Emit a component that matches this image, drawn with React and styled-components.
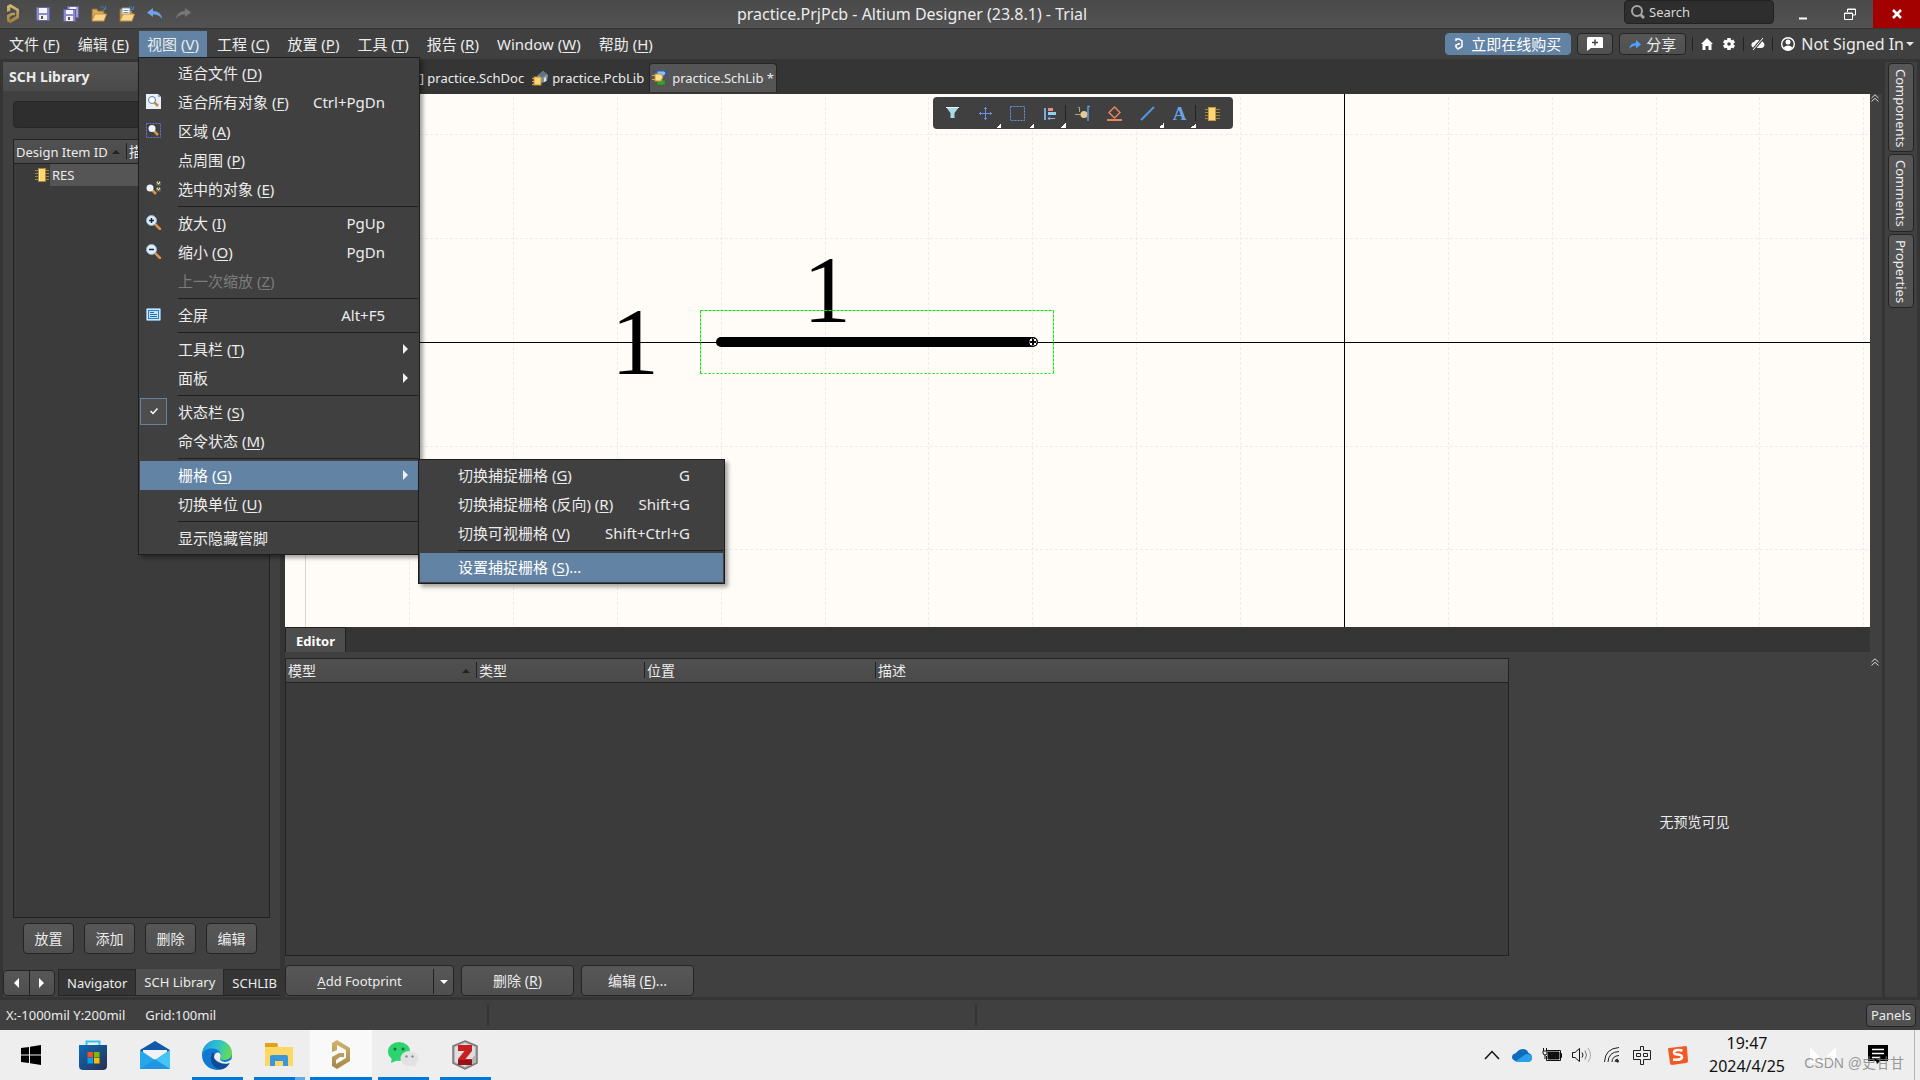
import styled, { createGlobalStyle, css } from 'styled-components';

const MENU_BAR = [
  { text: '文件', hot: 'F' },
  { text: '编辑', hot: 'E' },
  { text: '视图', hot: 'V', open: true },
  { text: '工程', hot: 'C' },
  { text: '放置', hot: 'P' },
  { text: '工具', hot: 'T' },
  { text: '报告', hot: 'R' },
  { text: 'Window', hot: 'W' },
  { text: '帮助', hot: 'H' },
];

const GRID_MENU = [
  { text: '切换捕捉栅格', hot: 'G', shortcut: 'G' },
  { text: '切换捕捉栅格 (反向)', hot: 'R', shortcut: 'Shift+G' },
  { text: '切换可视栅格', hot: 'V', shortcut: 'Shift+Ctrl+G' },
  { separator: true },
  { text: '设置捕捉栅格', hot: 'S', tail: '...', active: true },
];

const VIEW_MENU = [
  { text: '适合文件', hot: 'D' },
  { text: '适合所有对象', hot: 'F', shortcut: 'Ctrl+PgDn', icon: 'fitAll' },
  { text: '区域', hot: 'A', icon: 'area' },
  { text: '点周围', hot: 'P' },
  { text: '选中的对象', hot: 'E', icon: 'selected' },
  { separator: true },
  { text: '放大', hot: 'I', shortcut: 'PgUp', icon: 'zoomIn' },
  { text: '缩小', hot: 'O', shortcut: 'PgDn', icon: 'zoomOut' },
  { text: '上一次缩放', hot: 'Z', disabled: true },
  { separator: true },
  { text: '全屏', shortcut: 'Alt+F5', icon: 'fullScreen' },
  { separator: true },
  { text: '工具栏', hot: 'T', arrow: true },
  { text: '面板', arrow: true },
  { separator: true },
  { text: '状态栏', hot: 'S', checked: true },
  { text: '命令状态', hot: 'M' },
  { separator: true },
  { text: '栅格', hot: 'G', arrow: true, active: true, children: GRID_MENU },
  { text: '切换单位', hot: 'U' },
  { separator: true },
  { text: '显示隐藏管脚' },
];

const GRID_X = [124, 228, 332, 436, 540, 643, 747, 851, 955, 1163, 1267, 1371, 1474, 1578];
const GRID_Y = [40, 144, 352, 455];

/* ---------- icons ---------- */

const AltiumLogo = ({ size = 20, id = 'gold', from = '#d8bd78', to = '#9c7c3c' }) => (
  <svg width={size} height={size} viewBox="0 0 30 30">
    <defs>
      <linearGradient id={id} x1="0" y1="0" x2="0" y2="1">
        <stop offset="0" stopColor={from} />
        <stop offset="1" stopColor={to} />
      </linearGradient>
    </defs>
    <path d="M6 3 L11 0 L24 8 V21 L11 29 L6 26 V17 L13 13 H18 V17 H14 L10 20 V24 L20 18 V10 L11 5 V10 L6 12 Z" fill={`url(#${id})`} />
  </svg>
);

const Chip = ({ width = 14, height = 14 }) => (
  <svg width={width} height={height} viewBox="0 0 14 14">
    <path d="M0 2.5H14M0 5.5H14M0 8.5H14M0 11.5H14" stroke="#a5872f" strokeWidth="1" />
    <rect x="3.5" y="0.5" width="7" height="13" fill="#fbd77c" stroke="#b5832a" />
    <path d="M4.500 1V13" stroke="#fff2c4" />
  </svg>
);

const SaveIcon = () => (
  <svg width="14" height="14" viewBox="0 0 14 14">
    <path d="M0.500 0.500H13.500V13.500H1.500L0.500 12.500Z" fill="#8d8cc9" stroke="#6765a8" />
    <rect x="3" y="1" width="8" height="5" fill="#f5f5fb" />
    <rect x="3" y="8" width="8" height="5" fill="#f1f1f1" />
    <rect x="5" y="9" width="2" height="3" fill="#555" />
  </svg>
);

const SaveAllIcon = () => (
  <svg width="16" height="16" viewBox="0 0 16 16">
    <rect x="4.500" y="0.500" width="11" height="11" fill="#a3a1da" stroke="#6765a8" />
    <rect x="7" y="1" width="6" height="3" fill="#f5f5fb" />
    <rect x="0.500" y="3.500" width="12" height="12" fill="#8d8cc9" stroke="#5f5da0" />
    <rect x="3" y="4" width="7" height="4" fill="#f5f5fb" />
    <rect x="3" y="10" width="7" height="5" fill="#f1f1f1" />
    <rect x="5" y="11" width="2" height="3" fill="#555" />
  </svg>
);

const OpenIcon = ({ sheet }) => (
  <svg width="16" height="16" viewBox="0 0 16 16">
    <path d="M1 15V3H6L7 5H13V8" fill="#d9ab5e" stroke="#8f6a2c" />
    {sheet && <path d="M3 2H11V10H3ZM4.500 4.500H9.500M4.500 6.500H9.500" fill="#fff" stroke="#7f97b3" />}
    <path d="M1 15L4 8H15.500L13 15Z" fill="#fbd48b" stroke="#c08d3f" />
    <path d="M9 2Q12 -1 14 3M14.500 0V3.500H11.500" fill="none" stroke="#3f7ea8" />
  </svg>
);

const UndoIcon = ({ color, flip }) => (
  <svg width="16" height="12" viewBox="0 0 16 12">
    <path d={flip ? 'M16 4.500L10 0V3Q2 3 1 11Q4 6 10 6.500V9Z' : 'M0 4.500L6 0V3Q14 3 15 11Q12 6 6 6.500V9Z'} fill={color} />
  </svg>
);

const Magnifier = ({ sign }) => (
  <>
    <path d="M9 9L14 14" stroke="#d9954a" strokeWidth="2.500" strokeLinecap="round" />
    <circle cx="5.500" cy="5.500" r="5" fill="#dfeefb" stroke="#8fb3d6" />
    {sign && <path d={sign === '+' ? 'M3 5.500H8M5.500 3V8' : 'M3 5.500H8'} stroke="#223" strokeWidth="1.500" />}
  </>
);

const MENU_ICONS = {
  fitAll: (
    <>
      <path d="M0 0H12L15 3V15H0Z" fill="#e9f0fb" />
      <path d="M12 0L15 3H12Z" fill="#8fa3c4" />
      <path d="M8.500 8.500L12 12" stroke="#c98a3a" strokeWidth="2.500" />
      <circle cx="6" cy="6" r="3.500" fill="#f9fcff" stroke="#6d7f96" />
    </>
  ),
  area: (
    <>
      <rect x="0.500" y="0.500" width="14" height="14" fill="none" stroke="#6272d0" strokeDasharray="2 1" />
      <path d="M8 8L12 12" stroke="#d9954a" strokeWidth="2.500" />
      <circle cx="6" cy="5.500" r="3.500" fill="#eef7ff" />
    </>
  ),
  selected: (
    <>
      <path d="M6 9L10 13" stroke="#d9954a" strokeWidth="2.500" />
      <circle cx="4" cy="7" r="3.500" fill="#e9f4ff" />
      <path d="M11 1L14 4M14 1L11 4M11 7L14 10M14 7L11 10" stroke="#f3ef9a" strokeDasharray="1 1" strokeWidth="2" />
    </>
  ),
  zoomIn: <Magnifier sign="+" />,
  zoomOut: <Magnifier sign="-" />,
  fullScreen: (
    <>
      <rect x="0.500" y="1.500" width="14" height="12" rx="1" fill="#cfe6f8" stroke="#7fa9cc" />
      <rect x="2.500" y="3.500" width="10" height="8" fill="#bfe3fb" stroke="#2e7fc0" />
      <path d="M4 5.500H8M4 7.500H11M4 9.500H11" stroke="#2f6fa8" />
    </>
  ),
};

const PcbLibIcon = () => (
  <svg width="16" height="16" viewBox="0 0 16 16">
    <path d="M5 6L11 1L16 5L15 11L10 13Z" fill="#7f93a3" />
    <path d="M6 5L11 1L15 4L10 8Z" fill="#5f7488" />
    <path d="M12 8L14 7V11L12 12Z" fill="#d9e6ee" />
    <path d="M0 8.500H3M0 11.500H3M0 14.500H3" stroke="#d9a83c" />
    <rect x="2" y="7" width="7" height="8" fill="#fbd77c" stroke="#c8922f" />
  </svg>
);

const SchLibIcon = () => (
  <svg width="16" height="16" viewBox="0 0 16 16">
    <path d="M1 1.500H16M8 5.500H16" stroke="#1d50b8" />
    <path d="M5 1H12L14 3L12 6H5Z" fill="#8ebcf5" stroke="#2b62c8" />
    <rect x="5" y="10" width="8" height="5" fill="#3f9a35" stroke="#226c1d" strokeDasharray="1 1" />
    <path d="M0 5.500H4M0 9.500H4" stroke="#d9a83c" />
    <path d="M3 4H9L11 7L9 11H3Z" fill="#fbe08d" stroke="#c8922f" />
  </svg>
);

const TOOLS = [
  { name: 'Filter', art: <><path d="M1 1H14L9.500 7V12H5.500V7Z" fill="#a9dbe6" /><path d="M1 1.500H14" stroke="#dff6fb" /></> },
  { name: 'Move', corner: true, art: <path d="M1 7.500H14M7.500 1V14M2.500 6V9M12.500 6V9M6 2.500H9M6 12.500H9" stroke="#6b8fe0" /> },
  { name: 'Select', corner: true, art: <rect x="0.500" y="0.500" width="14" height="14" fill="none" stroke="#6b8fe0" strokeDasharray="2 1" /> },
  {
    name: 'Align', corner: true, split: true,
    art: (
      <>
        <path d="M2 2V14" stroke="#79a8e6" strokeWidth="2" />
        <rect x="5" y="2" width="5" height="3" fill="#e88" />
        <rect x="5" y="6" width="8" height="3" fill="#8cd4ea" />
        <path d="M5 12.500H12M7 10.500L5 12.500L7 14" stroke="#8fb3e6" fill="none" />
      </>
    ),
  },
  {
    name: 'Place Pin',
    art: (
      <>
        <path d="M3 1.500H4.500V6M0 8.500H8" stroke="#a7a48f" fill="none" />
        <circle cx="9" cy="8.500" r="3.500" fill="#e3c890" />
        <path d="M15 0.500H13V15" stroke="#5f95e6" fill="none" strokeWidth="1.500" />
      </>
    ),
  },
  { name: 'Place IEEE Symbol', art: <><path d="M7.500 1L13 6.500L7.500 12L2 6.500Z" fill="none" stroke="#e8835f" strokeWidth="1.500" /><path d="M0 14H15" stroke="#e8835f" strokeWidth="2" /></> },
  { name: 'Place Line', corner: true, art: <path d="M1 14L14 1" stroke="#4f97e0" strokeWidth="2" /> },
  {
    name: 'Place Text', corner: true, split: true,
    art: <text x="7.500" y="14" textAnchor="middle" fontFamily="Liberation Serif, serif" fontWeight="bold" fontSize="19" fill="#64a5ea">A</text>,
  },
  { name: 'Place Part', art: <><path d="M0 3.500H15M0 6.500H15M0 9.500H15M0 12.500H15" stroke="#a5872f" /><rect x="3.500" y="1.500" width="7" height="13" fill="#fbd77c" stroke="#c99a3c" /></> },
];

const DoubleChevron = () => (
  <svg width="8" height="8" viewBox="0 0 8 8" fill="none" stroke="#d8d8d8">
    <path d="M0.500 4L4 0.800L7.500 4M0.500 7.500L4 4.300L7.500 7.500" />
  </svg>
);

const StoreIcon = () => (
  <svg width="30" height="30" viewBox="0 0 30 30">
    <defs>
      <linearGradient id="store" x1="0" y1="0" x2="1" y2="1">
        <stop offset="0" stopColor="#0b6cbd" />
        <stop offset="1" stopColor="#2a2f4f" />
      </linearGradient>
    </defs>
    <path d="M8.500 6V1.500H21.500V6" fill="none" stroke="#35c1f1" strokeWidth="2" />
    <path d="M1 5H29V26Q29 30 25 30H5Q1 30 1 26Z" fill="url(#store)" />
    <rect x="9.500" y="12" width="5.500" height="5.500" fill="#f25022" />
    <rect x="16" y="12" width="5.500" height="5.500" fill="#7fba00" />
    <rect x="9.500" y="18" width="5.500" height="5.500" fill="#00a4ef" />
    <rect x="16" y="18" width="5.500" height="5.500" fill="#ffb900" />
  </svg>
);

const MailIcon = () => (
  <svg width="30" height="30" viewBox="0 0 30 30">
    <path d="M0 10L15 1L30 10V14H0Z" fill="#0f5aa8" />
    <path d="M3 10H27V20H3Z" fill="#f2f2f2" />
    <path d="M0 10L15 20L30 10V29H0Z" fill="#27a7ea" />
    <path d="M15 20L30 10V29Z" fill="#46c4f5" />
    <path d="M0 29L15 19L30 29Z" fill="#1b8fe0" opacity="0.7" />
    <path d="M3 10H27L15 18Z" fill="#f2f2f2" />
  </svg>
);

const EdgeIcon = () => (
  <svg width="30" height="30" viewBox="0 0 30 30">
    <defs>
      <linearGradient id="edgeTop" x1="0" y1="0.300" x2="1" y2="0.500">
        <stop offset="0" stopColor="#1e9fe0" />
        <stop offset="0.500" stopColor="#2dc3cf" />
        <stop offset="1" stopColor="#6bdc4c" />
      </linearGradient>
    </defs>
    <circle cx="15" cy="15" r="15" fill="#1279d3" />
    <path d="M0 14C1 5 8 0 15 0C24 0 30 6 30 13C30 18 26 20 22 20C18 20 17 18.500 18.500 17C20 13 17 9 11 8.500C6 8.300 2 10 0 14Z" fill="url(#edgeTop)" />
    <path d="M11 12C6 18 10 29 19 29.500C23 29 26 26 28 22.500C22 26 11 23 12 14Z" fill="#114a96" />
    <path d="M19 20.500C22 23 26 22 30 19V22L28 23C22 25 13 22 12 17C13 10 20 12 18.500 17C17.500 18.500 18 20 19 20.500Z" fill="#eeeeee" />
  </svg>
);

const FolderIcon = () => (
  <svg width="28" height="24" viewBox="0 0 28 24">
    <path d="M0 1H12L14 4H28V23H0Z" fill="#ffd765" />
    <path d="M0 0H12L13 2L12 4H0Z" fill="#e0a01a" />
    <path d="M5 23V14Q5 12 7 12H21Q23 12 23 14V23H18V18H10V23Z" fill="#3a96dd" />
  </svg>
);

const WeChatIcon = () => (
  <svg width="31" height="26" viewBox="0 0 31 26">
    <ellipse cx="11" cy="9.500" rx="11" ry="9.500" fill="#2bd46e" />
    <path d="M4 15L3 21L10 18Z" fill="#2bd46e" />
    <circle cx="7" cy="7" r="1.500" fill="#13743a" />
    <circle cx="15" cy="7" r="1.500" fill="#13743a" />
    <ellipse cx="21.500" cy="16.500" rx="9" ry="7.500" fill="#e2e2e2" />
    <path d="M23 23L28 25L27 20Z" fill="#e2e2e2" />
    <circle cx="18.500" cy="14.500" r="1.200" fill="#8b8b8b" />
    <circle cx="24.500" cy="14.500" r="1.200" fill="#8b8b8b" />
  </svg>
);

const ZIcon = () => (
  <svg width="26" height="30" viewBox="0 0 26 30">
    <path d="M13 1L25 6V23L13 29L1 23V6Z" fill="#b5b5b5" stroke="#777" strokeWidth="1.500" />
    <path d="M13 3L23 7V15L13 27L3 22V7Z" fill="#dedede" />
    <path d="M6 5H20V11L13.500 19H20V25H6V19L12.500 11H6Z" fill="#c81f25" />
    <path d="M6 20H20V25H6Z" fill="#981318" />
  </svg>
);

/* ---------- components ---------- */

const Caption = ({ text, hot, tail }) => (
  <span>
    {text}
    {hot && <> (<Hot>{hot}</Hot>)</>}
    {tail}
  </span>
);

const PopupMenu = ({ items, nested }) => (
  <Popup $nested={nested}>
    {items.map((item, i) =>
      item.separator ? (
        <Separator key={i} />
      ) : (
        <MenuRow key={i}>
          <MenuItem $active={item.active} disabled={item.disabled}>
            <IconSlot $checked={item.checked}>
              {item.icon && <svg width="15" height="15" viewBox="0 0 15 15">{MENU_ICONS[item.icon]}</svg>}
              {item.checked && (
                <svg width="8" height="7" viewBox="0 0 8 7" fill="none" stroke="#fff" strokeWidth="1.500">
                  <path d="M0.500 3L3 5.500L7.500 0.500" />
                </svg>
              )}
            </IconSlot>
            <Caption {...item} />
            <Shortcut>{item.shortcut}</Shortcut>
            <ArrowSlot>
              {item.arrow && <svg width="5" height="10" viewBox="0 0 5 10"><path d="M0 0L5 5L0 10Z" fill="#f0f0f0" /></svg>}
            </ArrowSlot>
          </MenuItem>
          {item.children && <PopupMenu items={item.children} nested />}
        </MenuRow>
      )
    )}
  </Popup>
);

const Schematic = () => (
  <Drawing>
    <path d="M20.500 0V533" stroke="#d6d6d2" />
    {GRID_X.map((x) => <line key={x} x1={x + 0.5} x2={x + 0.5} y1="3" y2="100%" stroke="#ececea" strokeDasharray="3 2" />)}
    {GRID_Y.map((y) => <line key={y} x1="0" x2="100%" y1={y + 0.5} y2={y + 0.5} stroke="#ececea" strokeDasharray="3 2" />)}
    <line x1="0" x2="100%" y1="248.500" y2="248.500" stroke="#000" />
    <line x1="1059.500" x2="1059.500" y1="0" y2="100%" stroke="#000" />
    <text x="326" y="280" fontFamily="Liberation Serif, serif" fontSize="96">1</text>
    <text x="518" y="228" fontFamily="Liberation Serif, serif" fontSize="96">1</text>
    <path d="M436 248H748" stroke="#000" strokeWidth="10" strokeLinecap="round" />
    <path d="M415.500 216.500H768.500" stroke="#00f000" strokeDasharray="3 1" />
    <path d="M415.500 216.500V279.500M768.500 216.500V279.500" stroke="#00f000" strokeDasharray="3 1" />
    <path d="M415.500 279.500H768.500" stroke="#00f000" strokeDasharray="2 2" />
    <circle cx="748" cy="248" r="3.500" fill="none" stroke="#fff" strokeDasharray="1 1" />
    <rect x="745" y="245" width="2" height="2" fill="#fff" />
    <rect x="749" y="245" width="2" height="2" fill="#fff" />
    <rect x="745" y="249" width="2" height="2" fill="#fff" />
    <rect x="749" y="249" width="2" height="2" fill="#fff" />
  </Drawing>
);

const TitleArea = () => (
  <TitleBar>
    <QuickTools>
      <AltiumLogo size={20} />
      <IconButton aria-label="Save"><SaveIcon /></IconButton>
      <IconButton aria-label="Save All"><SaveAllIcon /></IconButton>
      <IconButton aria-label="Open"><OpenIcon /></IconButton>
      <IconButton aria-label="Open Project"><OpenIcon sheet /></IconButton>
      <IconButton aria-label="Undo"><UndoIcon color="#6fa3e8" /></IconButton>
      <IconButton aria-label="Redo"><UndoIcon color="#777777" flip /></IconButton>
    </QuickTools>
    <Title>practice.PrjPcb - Altium Designer (23.8.1) - Trial</Title>
    <WindowTools>
      <SearchBox>
        <svg width="14" height="14" viewBox="0 0 14 14" fill="none" stroke="#a6a6a6" strokeWidth="2">
          <circle cx="6" cy="6" r="5" />
          <path d="M9.500 9.500L13 13" strokeWidth="3" />
        </svg>
        <input aria-label="Search" placeholder="Search" />
      </SearchBox>
      <WindowButton aria-label="Minimize"><svg width="12" height="12"><path d="M2 10.500H10" stroke="#fff" strokeWidth="2" /></svg></WindowButton>
      <WindowButton aria-label="Restore">
        <svg width="12" height="12" viewBox="0 0 12 12" fill="none" stroke="#fff">
          <path d="M3.500 4V1H11.500V7H9M3.500 1.500H11.500M0.500 5H8.500V11.500H0.500ZM0.500 5.500H8.500" />
        </svg>
      </WindowButton>
      <WindowButton aria-label="Close" $close><svg width="10" height="10"><path d="M1 1L9 9M9 1L1 9" stroke="#fff" strokeWidth="2.500" /></svg></WindowButton>
    </WindowTools>
  </TitleBar>
);

const MenuArea = () => (
  <MenuBar>
    {MENU_BAR.map((m) => (
      <MenuHolder key={m.hot}>
        <MenuTitle $open={m.open}><Caption {...m} /></MenuTitle>
        {m.open && <PopupMenu items={VIEW_MENU} />}
      </MenuHolder>
    ))}
    <Account>
      <AccountButton $primary>
        <svg width="8" height="12" viewBox="0 0 8 12" fill="none" stroke="#fff" strokeWidth="1.500"><path d="M1 3V1L4 1L7 3V8.500L3 11L1 9V7L5 5.500" /></svg>
        立即在线购买
      </AccountButton>
      <AccountButton aria-label="Comment">
        <svg width="16" height="14" viewBox="0 0 16 14"><path d="M1 0H15L16 1V11H4L0 14V1Z" fill="#fff" /><path d="M5 5.500H11M8 2.500V8.500" stroke="#444" strokeWidth="1.500" /></svg>
      </AccountButton>
      <AccountButton>
        <svg width="12" height="9" viewBox="0 0 12 9"><path d="M0 9Q1 3 7 3V0L12 4.500L7 8.500V5.500Q3 5.500 0 9Z" fill="#4da3ff" /></svg>
        分享
      </AccountButton>
      <Rule />
      <IconButton aria-label="Home">
        <svg width="12" height="12" viewBox="0 0 12 12" fill="#fff"><path d="M6 0L12 6H10.500V12H7.500V8H4.500V12H1.500V6H0Z" /></svg>
      </IconButton>
      <IconButton aria-label="Settings">
        <svg width="12" height="12" viewBox="0 0 12 12">
          <path d="M6 0V12M0.800 3L11.200 9M0.800 9L11.200 3" stroke="#fff" strokeWidth="3.500" />
          <circle cx="6" cy="6" r="4.500" fill="#fff" /><circle cx="6" cy="6" r="1.800" fill="#404040" />
        </svg>
      </IconButton>
      <Rule />
      <IconButton aria-label="Cloud offline">
        <svg width="14" height="12" viewBox="0 0 14 12">
          <path d="M3 10Q0 9 0.500 6Q1 4 3 4Q5 1 8 2Q13 3 13.500 7Q13 10 10 10Z" fill="#fff" />
          <path d="M2 12L12 0" stroke="#404040" strokeWidth="3" /><path d="M2 12L12 0" stroke="#fff" />
        </svg>
      </IconButton>
      <Rule />
      <SignIn>
        <svg width="14" height="14" viewBox="0 0 14 14"><circle cx="7" cy="7" r="6.300" fill="none" stroke="#fff" strokeWidth="1.400" /><circle cx="7" cy="5" r="2.500" fill="#fff" /><path d="M2.500 10.500Q7 6.500 11.500 10.500L9 13H5Z" fill="#fff" /></svg>
        <span>Not Signed In</span>
        <svg width="8" height="4" viewBox="0 0 8 4"><path d="M0 0H8L4 4Z" fill="#e6e6e6" /></svg>
      </SignIn>
    </Account>
  </MenuBar>
);

const LibraryPanel = () => (
  <Panel>
    <PanelTitle>SCH Library</PanelTitle>
    <PanelBody>
      <FilterInput aria-label="Filter" />
      <ListBox>
        <DataTable>
          <thead>
            <tr><Th $width="113px" $latin>Design Item ID<SortMark /></Th><Th $last>描述</Th></tr>
          </thead>
          <tbody>
            <tr><PartCell colSpan="2"><div><Chip /><span>RES</span></div></PartCell></tr>
          </tbody>
        </DataTable>
      </ListBox>
      <PanelActions>
        {['放置', '添加', '删除', '编辑'].map((t) => <Button key={t}>{t}</Button>)}
      </PanelActions>
    </PanelBody>
    <PanelTabs>
      <Pager>
        <button aria-label="Previous"><svg width="5" height="10"><path d="M5 0L0 5L5 10Z" fill="#fff" /></svg></button>
        <button aria-label="Next"><svg width="5" height="10"><path d="M0 0L5 5L0 10Z" fill="#fff" /></svg></button>
      </Pager>
      <PanelTab>Navigator</PanelTab>
      <PanelTab $current>SCH Library</PanelTab>
      <PanelTab>SCHLIB</PanelTab>
    </PanelTabs>
  </Panel>
);

const EditorPane = () => (
  <Editor>
    <EditorMain>
      <ModelBox>
        <DataTable>
          <thead>
            <tr>
              <Th $width="191px">模型<SortMark /></Th>
              <Th $width="168px">类型</Th>
              <Th $width="231px">位置</Th>
              <Th $last>描述</Th>
            </tr>
          </thead>
        </DataTable>
      </ModelBox>
      <EditorActions>
        <SplitButton>
          <button><Hot>A</Hot>dd Footprint</button>
          <button aria-label="More"><svg width="8" height="4"><path d="M0 0H8L4 4Z" fill="#fff" /></svg></button>
        </SplitButton>
        <Button $wide><Caption text="删除" hot="R" /></Button>
        <Button $wide><Caption text="编辑" hot="E" tail="..." /></Button>
      </EditorActions>
    </EditorMain>
    <Preview>无预览可见</Preview>
    <Collapse><DoubleChevron /></Collapse>
  </Editor>
);

const Taskbar = () => (
  <TaskBar>
    <TaskButton aria-label="Start"><svg width="20" height="20" viewBox="0 0 20 20"><path d="M0 3L8 2V9.500H0ZM9 1.800L20 0V9.500H9ZM0 10.500H8V18L0 17ZM9 10.500H20V20L9 18.200Z" /></svg></TaskButton>
    <TaskButton aria-label="Store"><StoreIcon /></TaskButton>
    <TaskButton aria-label="Mail"><MailIcon /></TaskButton>
    <TaskButton aria-label="Edge" $running><EdgeIcon /></TaskButton>
    <TaskButton aria-label="Explorer" $running $stacked><FolderIcon /></TaskButton>
    <TaskButton aria-label="Altium Designer" $running $focused><AltiumLogo size={30} id="gold2" from="#cfb56d" to="#a3874a" /></TaskButton>
    <TaskButton aria-label="WeChat" $running><WeChatIcon /></TaskButton>
    <TaskButton aria-label="Zotero" $running><ZIcon /></TaskButton>
    <Tray>
      <TraySlot><svg width="16" height="10" fill="none" stroke="#111" strokeWidth="1.500"><path d="M1 9L8 1.500L15 9" /></svg></TraySlot>
      <TraySlot>
        <svg width="20" height="13" viewBox="0 0 20 13">
          <path d="M4 12Q0 11 0 8Q0 5 4 4Q7 0 11 0Q15 0 16.500 4Q20 5 20 8.500Q20 12 16 12.500Z" fill="#0f6cbd" />
          <path d="M3 12.500L14 5Q20 5 20 9Q20 13 16 13H5Z" fill="#28a0ea" />
        </svg>
      </TraySlot>
      <TraySlot>
        <svg width="20" height="14" viewBox="0 0 20 14" fill="none" stroke="#111">
          <path d="M5 2.500H18.500V12.500H4.500V8M18.500 5.500H19.500V9.500H18.500" /><path d="M6 4H17V11H6Z" fill="#111" /><path d="M1 3H5V5Q5 7 3 7Q1 7 1 5ZM1.500 0V3M4.500 0V3M3 7V11" />
        </svg>
      </TraySlot>
      <TraySlot>
        <svg width="20" height="16" viewBox="0 0 20 16" fill="none" stroke="#111">
          <path d="M0.500 5.500H3L7.500 1.500V14.500L3 10.500H0.500Z" /><path d="M10 5.500Q12 8 10 10.500" /><path d="M13 3.500Q16 8 13 12.500" stroke="#777" /><path d="M16 1Q21 8 16 15" stroke="#aaa" />
        </svg>
      </TraySlot>
      <TraySlot>
        <svg width="16" height="16" viewBox="0 0 16 16" fill="none" stroke="#222">
          <path d="M0.500 15Q1 1.500 15 0.500M4 15Q4.500 5 15 4.500M8 15Q8 9 15 8.500M11 15Q11 12 14 12" /><circle cx="13.500" cy="14" r="1.500" fill="#222" stroke="none" />
        </svg>
      </TraySlot>
      <TraySlot>
        <svg width="18" height="19" viewBox="0 0 18 19" fill="none" stroke="#222">
          <path d="M7.500 0.500H10.500V4.500H17.500V13.500H10.500V18.500H7.500V13.500H0.500V4.500H7.500ZM3.500 7.500H7.500V10.500H3.500ZM10.500 7.500H14.500V10.500H10.500Z" />
        </svg>
      </TraySlot>
      <TraySlot $wide>
        <svg width="20" height="20" viewBox="0 0 20 20">
          <path d="M1 3L18 1Q19 1 19 3L20 16Q20 18 18 18L4 20Q2 20 2 18L0 4Q0 3 1 3Z" fill="#f15a24" />
          <path d="M14.500 5.500Q6 4 6 7.500Q6 9.500 10 9.500Q14.500 10 14 12.500Q13 15.500 5 14.500" fill="none" stroke="#fff" strokeWidth="2.500" />
        </svg>
      </TraySlot>
      <Clock><span>19:47</span><span>2024/4/25</span></Clock>
      <TrayEnd>
        <svg width="26" height="16" viewBox="0 0 26 16" fill="#fff"><path d="M0 16V0L9 9L10 16ZM26 16V0L17 9L16 16ZM5 8L13 14L21 8V16H5Z" /></svg>
        <svg width="20" height="20" viewBox="0 0 20 20"><path d="M0 0H20V16H12L9 19L8 16H0Z" fill="#000" /><path d="M4 4.500H16M4 8.500H16M4 12.500H12" stroke="#fff" strokeWidth="1.500" /></svg>
        <Watermark>CSDN @史甘甘</Watermark>
      </TrayEnd>
    </Tray>
  </TaskBar>
);

const App = () => (
  <Screen>
    <GlobalStyle />
    <TitleArea />
    <MenuArea />
    <Workspace>
      <LibraryPanel />
      <Center>
        <DocTabs>
          <DocTab>[1] practice.SchDoc</DocTab>
          <DocTab><PcbLibIcon />practice.PcbLib</DocTab>
          <DocTab $current><SchLibIcon />practice.SchLib *</DocTab>
        </DocTabs>
        <CanvasRow>
          <CanvasColumn>
            <Canvas>
              <Schematic />
              <ActiveBar>
                {TOOLS.map((t) => (
                  <Tool key={t.name} aria-label={t.name} $corner={t.corner} $split={t.split}>
                    <svg width="15" height="15" viewBox="0 0 15 15">{t.art}</svg>
                  </Tool>
                ))}
              </ActiveBar>
            </Canvas>
            <EditorTabs><EditorTab>Editor</EditorTab></EditorTabs>
          </CanvasColumn>
          <Collapse><DoubleChevron /></Collapse>
        </CanvasRow>
        <EditorPane />
      </Center>
      <SideBar>
        {['Components', 'Comments', 'Properties'].map((t) => <SideTab key={t}>{t}</SideTab>)}
      </SideBar>
    </Workspace>
    <StatusBar>
      <StatusCell><span>X:-1000mil Y:200mil</span><span>Grid:100mil</span></StatusCell>
      <StatusCell />
      <PanelsButton>Panels</PanelsButton>
    </StatusBar>
    <Taskbar />
  </Screen>
);

/* ---------- styles ---------- */

const GlobalStyle = createGlobalStyle`
  * { box-sizing: border-box; }
  body { margin: 0; }
  body, button, input {
    font-family: "Noto Sans", "Noto Sans CJK SC", sans-serif;
    font-size: 15px;
    color: #ececec;
  }
  button {
    padding: 0;
    border: none;
    background: none;
    line-height: 20px;
    white-space: nowrap;
  }
  svg { display: block; flex: none; }
`;

const center = css`
  display: flex;
  align-items: center;
  justify-content: center;
`;

const raised = css`
  background: linear-gradient(#575757, #4f4f4f);
  border: 1px solid #242424;
  border-radius: 4px;
`;

const Screen = styled.div`
  display: flex;
  flex-direction: column;
  min-height: 100vh;
  background: #353535;
  overflow: hidden;
`;

const Hot = styled.u`
  text-underline-offset: 2px;
`;

const TitleBar = styled.header`
  display: grid;
  grid-template-columns: 1fr auto 1fr;
  height: 29px;
  background: linear-gradient(#4a4a4a, #525252);
  border-bottom: 1px solid #333333;
`;

const QuickTools = styled.div`
  display: flex;
  align-items: center;
  padding-left: 3px;
  gap: 12px;
`;

const IconButton = styled.button`
  ${center}
  min-width: 16px;
`;

const Title = styled.h1`
  margin: 0;
  font-size: 16px;
  font-weight: normal;
  line-height: 28px;
  white-space: nowrap;
  padding-right: 96px;
`;

const WindowTools = styled.div`
  display: flex;
  justify-content: flex-end;
`;

const SearchBox = styled.label`
  display: flex;
  align-items: center;
  gap: 4px;
  width: 150px;
  height: 24px;
  margin-right: 5px;
  padding: 0 6px;
  background: #2e2e2e;
  border: 1px solid #222222;
  border-radius: 4px;

  input {
    width: 100%;
    padding: 0;
    border: none;
    background: none;
    font-size: 13px;
  }

  input::placeholder {
    color: #d8d8d8;
  }
`;

const WindowButton = styled.button`
  ${center}
  width: 47px;
  height: 28px;
  background: ${props => (props.$close ? '#a30000' : 'none')};
`;

const MenuBar = styled.nav`
  display: flex;
  gap: 2px;
  height: 30px;
  padding: 2px 0 0 1px;
  background: #404040;
`;

const MenuHolder = styled.div`
  position: relative;
`;

const MenuTitle = styled.button`
  height: 26px;
  padding: 0 8px;
  background: ${props => (props.$open ? '#6283a3' : 'none')};
`;

const Popup = styled.ul`
  position: absolute;
  z-index: ${props => (props.$nested ? 3 : 2)};
  top: ${props => (props.$nested ? '-2px' : '26px')};
  left: ${props => (props.$nested ? '278px' : '-1px')};
  width: ${props => (props.$nested ? '307px' : '282px')};
  margin: 0;
  padding: 1px;
  list-style: none;
  background: #404040;
  border: 1px solid #1e1e1e;
  box-shadow: 3px 3px 4px rgba(0, 0, 0, 0.35);
`;

const MenuRow = styled.li`
  position: relative;
`;

const MenuItem = styled.button`
  display: flex;
  align-items: center;
  width: 100%;
  height: 29px;
  padding-bottom: 2px;
  text-align: left;
  color: ${props => (props.$active ? '#ffffff' : '#ececec')};
  background: ${props => (props.$active ? '#6283a3' : 'none')};

  &:disabled {
    color: #7c7c7c;
  }
`;

const IconSlot = styled.span`
  ${center}
  width: 27px;
  height: 27px;
  margin: 0 11px 0 0;
  border: 1px solid ${props => (props.$checked ? '#6283a3' : 'transparent')};
  background: ${props => (props.$checked ? '#4d4d4d' : 'none')};
`;

const Shortcut = styled.span`
  margin-left: auto;
`;

const ArrowSlot = styled.span`
  width: 33px;
  padding-left: 18px;
`;

const Separator = styled.li`
  height: 5px;
  margin-left: 38px;
  padding-top: 2px;

  &::before {
    content: "";
    display: block;
    height: 1px;
    background: #1e1e1e;
  }
`;

const Account = styled.div`
  display: flex;
  align-items: center;
  gap: 6px;
  margin: 0 6px 2px auto;
`;

const AccountButton = styled.button`
  ${center}
  gap: 5px;
  height: 22px;
  padding: 0 9px;
  ${raised}
  ${props => props.$primary && css`
    gap: 8px;
    color: #ffffff;
    background: #6283a3;
    border-color: #6283a3;
  `}
`;

const Rule = styled.span`
  width: 1px;
  height: 14px;
  background: #222222;
`;

const SignIn = styled.button`
  display: flex;
  align-items: center;
  gap: 2px;
  padding-left: 2px;
  font-size: 16px;

  span {
    padding-left: 4px;
  }
`;

const Workspace = styled.main`
  display: flex;
  flex: 1;
  min-height: 0;
  padding: 0 3px;
`;

const Panel = styled.aside`
  display: flex;
  flex-direction: column;
  width: 277px;
  margin: 3px 5px 3px 0;
  background: #404040;
`;

const PanelTitle = styled.h2`
  margin: 0;
  padding-left: 6px;
  font-size: 14px;
  line-height: 29px;
  background: linear-gradient(#535353, #4a4a4a);
`;

const PanelBody = styled.div`
  display: flex;
  flex-direction: column;
  flex: 1;
  padding: 10px 10px 9px;
`;

const FilterInput = styled.input`
  height: 27px;
  margin-bottom: 11px;
  background: #2e2e2e;
  border: 1px solid #262626;
  border-radius: 4px;
`;

const ListBox = styled.div`
  flex: 1;
  width: 257px;
  background: #3b3b3b;
  border: 1px solid #222222;
`;

const DataTable = styled.table`
  width: 100%;
  border-collapse: collapse;
  table-layout: fixed;
  font-size: 14px;
`;

const Th = styled.th`
  width: ${props => props.$width};
  height: 23px;
  padding: 2px 2px 0;
  font-size: ${props => (props.$latin ? '13px' : '14px')};
  font-weight: normal;
  line-height: 20px;
  text-align: left;
  white-space: nowrap;
  border-bottom: 1px solid #222222;
  background:
    linear-gradient(#222222, #222222) right center / ${props => (props.$last ? '0' : '1px')} 16px no-repeat,
    linear-gradient(#505050, #4a4a4a);
`;

const SortMark = styled.span`
  float: right;
  margin: 8px 5px 0 0;
  border: 4px solid transparent;
  border-top: none;
  border-bottom-color: #222222;
`;

const PartCell = styled.td`
  padding: 0 0 0 21px;

  div {
    display: flex;
    align-items: center;
    gap: 1px;
  }

  span {
    flex: 1;
    padding-left: 2px;
    font-size: 13px;
    line-height: 22px;
    background: #555555;
  }
`;

const PanelActions = styled.div`
  display: flex;
  gap: 10px;
  padding: 5px 10px 6px;
`;

const Button = styled.button`
  width: ${props => (props.$wide ? '113px' : '51px')};
  height: 31px;
  font-size: 14px;
  ${raised}
`;

const PanelTabs = styled.div`
  display: flex;
  height: 28px;
  overflow: hidden;
`;

const Pager = styled.div`
  display: flex;
  flex: none;
  width: 52px;
  height: 26px;
  margin: 1px 3px 0 0;
  ${raised}

  button {
    ${center}
    flex: 1;
  }

  button + button {
    border-left: 1px solid #222222;
  }
`;

const PanelTab = styled.button`
  flex: none;
  height: 27px;
  padding: 0 8px;
  font-size: 13px;
  border: 1px solid #262626;
  border-width: ${props => (props.$current ? '0 0 1px' : '1px')};
  background: ${props => (props.$current ? '#4f4f4f' : '#353535')};
`;

const Center = styled.section`
  display: flex;
  flex-direction: column;
  flex: 1;
  min-width: 0;
`;

const DocTabs = styled.div`
  display: flex;
  align-items: flex-end;
  gap: 2px;
  height: 35px;
  padding: 0 0 2px 120px;
`;

const DocTab = styled.button`
  display: flex;
  align-items: center;
  gap: 4px;
  height: 29px;
  padding: 0 2px 1px;
  font-size: 13px;
  border: 1px solid ${props => (props.$current ? '#262626' : 'transparent')};
  border-bottom: none;
  border-radius: 4px 4px 0 0;
  background: ${props => (props.$current ? '#555555' : 'none')};
`;

const CanvasRow = styled.div`
  display: flex;
  flex: 1;
`;

const CanvasColumn = styled.div`
  display: flex;
  flex-direction: column;
  flex: 1;
`;

const Canvas = styled.div`
  position: relative;
  flex: 1;
  background: #fffcf7;
`;

const Drawing = styled.svg`
  position: absolute;
  width: 100%;
  height: 100%;
`;

const ActiveBar = styled.div`
  position: absolute;
  top: 3px;
  left: 50%;
  display: flex;
  width: 300px;
  height: 32px;
  margin-left: -145px;
  padding: 0 4px;
  background: #404040;
  border-radius: 4px;
`;

const Tool = styled.button`
  ${center}
  position: relative;
  flex: 1;

  svg {
    overflow: visible;
  }

  ${props => props.$corner && css`
    &::after {
      content: "";
      position: absolute;
      right: 0;
      bottom: 1px;
      width: 5px;
      height: 5px;
      background: linear-gradient(135deg, transparent 50%, #ffffff 50%);
    }
  `}

  ${props => props.$split && css`
    &::before {
      content: "";
      position: absolute;
      right: 0;
      top: 8px;
      width: 1px;
      height: 16px;
      background: #222222;
    }
  `}
`;

const EditorTabs = styled.div`
  height: 25px;
  background: #353535;
`;

const EditorTab = styled.button`
  height: 25px;
  padding: 2px 10px 0;
  font-size: 13px;
  font-weight: bold;
  color: #ffffff;
  border: 1px solid #222222;
  border-bottom: none;
  background: #4d4d4d;
`;

const Collapse = styled.div`
  width: 12px;
  padding: 0 0 0 1px;
  background: #404040;
`;

const Editor = styled.div`
  display: flex;
  height: 345px;
  margin-bottom: 3px;
  background: #404040;

  ${Collapse} {
    padding-top: 6px;
  }
`;

const EditorMain = styled.div`
  display: flex;
  flex-direction: column;
  flex: 1;
  padding-top: 6px;
`;

const ModelBox = styled.div`
  flex: 1;
  background: #3b3b3b;
  border: 1px solid #222222;
`;

const EditorActions = styled.div`
  display: flex;
  gap: 7px;
  padding: 9px 0 1px;
`;

const SplitButton = styled.div`
  display: flex;
  width: 169px;
  height: 31px;
  ${raised}

  button {
    flex: 1;
    font-size: 13px;
  }

  button + button {
    ${center}
    flex: none;
    width: 20px;
    margin: 3px 0 1px;
    border-left: 1px solid #222222;
  }
`;

const Preview = styled.div`
  ${center}
  width: 22.6%;
  padding: 0 0 8px 10px;
  font-size: 14px;
`;

const SideBar = styled.aside`
  display: flex;
  flex-direction: column;
  gap: 2px;
  width: 32px;
  margin: 3px 0 3px 3px;
  padding: 1px 3px;
  background: #404040;
`;

const SideTab = styled.button`
  padding: 5px 2px 4px;
  font-size: 13px;
  writing-mode: vertical-rl;
  ${raised}
`;

const StatusBar = styled.footer`
  display: flex;
  align-items: center;
  height: 30px;
  padding-right: 4px;
  font-size: 13px;
  background: #404040;
`;

const StatusCell = styled.div`
  display: flex;
  align-items: center;
  gap: 20px;
  width: 25.5%;
  height: 22px;
  padding-left: 6px;
  border-right: 2px solid #353535;
`;

const PanelsButton = styled.button`
  height: 23px;
  margin-left: auto;
  padding: 0 4px;
  font-size: 13px;
  ${raised}
`;

const TaskBar = styled.div`
  display: flex;
  height: 50px;
  color: #111111;
  background: #eeeeee;
`;

const TaskButton = styled.button`
  ${center}
  position: relative;
  width: 62px;
  background: ${props => (props.$focused ? '#f9f9f9' : 'none')};

  &::after {
    content: "";
    position: absolute;
    bottom: 0;
    left: ${props => (props.$focused ? '0' : '6px')};
    right: ${props => (props.$focused ? '0' : '5px')};
    height: ${props => (props.$running ? '3px' : '0')};
    background: linear-gradient(to right, #0078d7 ${props => (props.$stacked ? '80%, #62a8e5 80%' : '100%, #0078d7')});
  }
`;

const Tray = styled.div`
  display: flex;
  align-items: center;
  margin-left: auto;
`;

const TraySlot = styled.span`
  ${center}
  width: ${props => (props.$wide ? '42px' : '30px')};
`;

const Clock = styled.time`
  display: flex;
  flex-direction: column;
  align-items: center;
  width: 96px;
  font-size: 16px;
  line-height: 23px;
`;

const TrayEnd = styled.div`
  position: relative;
  display: flex;
  align-items: center;
  gap: 32px;
  height: 50px;
  margin-right: 5px;
  padding: 0 26px 0 15px;
  border-right: 1px solid #b5b5b5;
`;

const Watermark = styled.span`
  position: absolute;
  right: 10px;
  bottom: 7px;
  font-family: "Liberation Sans", "Noto Sans CJK SC", sans-serif;
  font-size: 14px;
  line-height: 20px;
  white-space: nowrap;
  color: rgba(128, 128, 128, 0.8);
`;

export default App;
